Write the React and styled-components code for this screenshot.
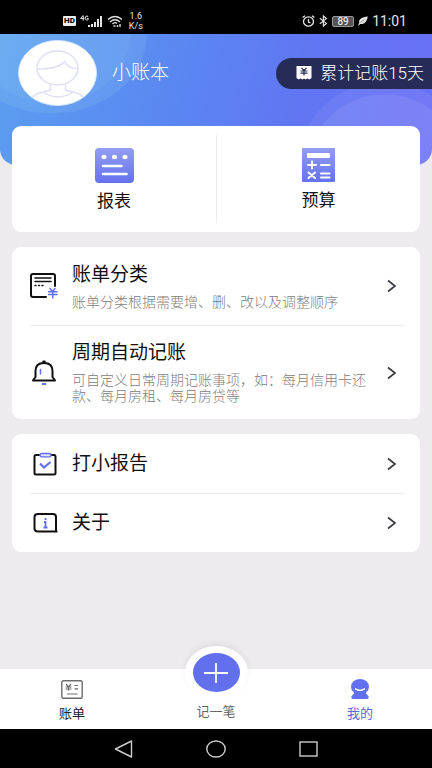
import styled, { createGlobalStyle } from "styled-components";

const GlobalStyle = createGlobalStyle`
  * {
    box-sizing: border-box;
  }

  body {
    margin: 0;
    background: #edebee;
    font-family: Roboto, "Noto Sans CJK SC", sans-serif;
    color: #111;
  }

  button {
    border: 0;
    padding: 0;
    background: none;
    font: inherit;
    color: inherit;
    cursor: pointer;
  }

  svg {
    display: block;
    flex-shrink: 0;
  }
`;

const Page = styled.div`
  display: flex;
  flex-direction: column;
  min-height: 100vh;
`;

const StatusBar = styled.div`
  display: flex;
  align-items: center;
  justify-content: space-between;
  height: 34px;
  padding: 8px 25px 0 63px;
  background: #000;
  color: #e4e4e4;
`;

const StatusGroup = styled.div`
  display: flex;
  align-items: center;
  gap: 4px;
`;

const HdBadge = styled.span`
  padding: 0 1px;
  border-radius: 1px;
  background: #eee;
  color: #000;
  font-size: 8px;
  font-weight: 800;
  line-height: 10px;
`;

const NetSpeed = styled.span`
  margin-left: 2px;
  font-size: 9px;
  line-height: 10px;
  text-align: center;
`;

const Battery = styled.span`
  width: 22px;
  border: 1px solid #999;
  border-radius: 2px;
  background: #555;
  color: #fff;
  font-size: 10px;
  line-height: 9px;
  text-align: center;
`;

const Clock = styled.span`
  font-size: 14px;
  line-height: 16px;
`;

const Header = styled.header`
  height: 131px;
  border-radius: 0 0 16px 16px;
  background:
    radial-gradient(ellipse 72px 62px at 89% 122px, rgba(255, 255, 255, 0.07) 98%, transparent),
    radial-gradient(ellipse 84px 74px at 89% 122px, rgba(255, 255, 255, 0.06) 98%, transparent),
    radial-gradient(ellipse 80px 70px at 12% 0, rgba(170, 225, 240, 0.08) 97%, transparent),
    radial-gradient(ellipse 96px 80px at 12% 0, rgba(170, 225, 240, 0.13) 98%, transparent),
    linear-gradient(105deg, #5b9ff0 0%, #5a86f1 42%, #6176f2 68%, #6a6ff5 100%);
`;

const Profile = styled.div`
  display: flex;
  align-items: center;
  gap: 15px;
  padding: 6px 0 0 18px;
`;

const UserName = styled.h1`
  flex: 1;
  margin: 0;
  color: #fff;
  font-size: 19px;
  font-weight: 300;
  line-height: 24px;
`;

const DaysBadge = styled.div`
  display: flex;
  align-items: center;
  gap: 8px;
  height: 31px;
  padding: 0 8px 0 20px;
  border-radius: 16px 0 0 16px;
  background: #262b58;
  color: #fff;
  font-size: 17px;
  font-weight: 300;
  line-height: 24px;
  white-space: nowrap;
`;

const Content = styled.main`
  display: flex;
  flex: 1;
  flex-direction: column;
  gap: 15px;
  margin-top: -39px;
  padding: 0 12px 24px;
`;

const Card = styled.section`
  border-radius: 9px;
  background: #fff;
`;

const ShortcutCard = styled(Card)`
  display: grid;
  grid-template-columns: 1fr 1fr;
  padding: 9px 0;
`;

const Shortcut = styled.button`
  display: flex;
  flex-direction: column;
  align-items: center;
  gap: 6px;
  height: 88px;
  padding-top: 13px;
  font-size: 17px;
  line-height: 24px;

  & + & {
    border-left: 1px solid #ececf0;
  }
`;

const Row = styled.button`
  display: grid;
  grid-template-columns: 28px 1fr 10px;
  align-items: center;
  gap: 14px;
  width: calc(100% - 34px);
  min-height: ${(props) => props.$height}px;
  margin: 0 16px 0 18px;
  padding-right: 7px;
  text-align: left;

  & + & {
    border-top: 1px solid #ececee;
  }
`;

const RowText = styled.span`
  display: flex;
  flex-direction: column;
  gap: 7px;
`;

const RowTitle = styled.span`
  font-size: 19px;
  line-height: 24px;
`;

const RowNote = styled.span`
  color: #808080;
  font-size: 14px;
  font-weight: 300;
  line-height: 16px;
`;

const TabBar = styled.nav`
  display: grid;
  grid-template-columns: repeat(3, 1fr);
  grid-template-rows: 60px;
  align-items: end;
  background: #fff;
`;

const Tab = styled.button`
  display: flex;
  flex-direction: column;
  align-items: center;
  gap: 5px;
  padding-bottom: 5px;
  color: ${(props) => props.$color};
  font-size: 13px;
  line-height: 20px;
`;

const AddTab = styled(Tab)`
  gap: 3px;
  padding-bottom: 7px;
`;

const AddCircle = styled.span`
  display: flex;
  align-items: center;
  justify-content: center;
  width: 63px;
  height: 53px;
  border: solid #fff;
  border-width: 7px 8px;
  border-radius: 50%;
  background: #6270ee;
  box-shadow: 0 -3px 6px rgba(0, 0, 0, 0.06);
`;

const SystemNav = styled.div`
  display: flex;
  align-items: center;
  justify-content: center;
  gap: 73px;
  height: 39px;
  background: #000;
`;

const SystemKey = styled.button`
  display: flex;
`;

const Signal = () => (
  <svg width="23" height="13" viewBox="0 0 23 13" fill="#e4e4e4">
    <path d="M3 .6L.6 3.600h3.800M3.200.600v5M8.200 1.600C6.400.2 5.200 1.400 5.200 3s1.600 3 3 1.600V3.300H6.800" fill="none" stroke="#e4e4e4" />
    <path d="M8 10h2v2H8zM11 9h2v3h-2zM14 7h2v5h-2zM17 4h2v8h-2zM20 1h2v11h-2z" />
  </svg>
);

const Wifi = () => (
  <svg width="16" height="13" viewBox="0 0 16 13" fill="none" stroke="#e4e4e4" strokeWidth="1.400">
    <path d="M1 4.500Q8-1.500 15 4.500M3 7Q8 2.500 13 7M5.500 9Q8 6.500 10 8.500" />
    <path d="M6.500 11h2M10.500 10v2M13 9v3" />
  </svg>
);

const Alarm = () => (
  <svg width="13" height="12" viewBox="0 0 13 12" fill="none" stroke="#e4e4e4" strokeWidth="1.300">
    <ellipse cx="6.500" cy="6.500" rx="5" ry="4.600" />
    <path d="M6.500 4v3l2 1M.6 2.600L3 .8M12.400 2.600L10 .8" />
  </svg>
);

const Bluetooth = () => (
  <svg width="9" height="12" viewBox="0 0 9 12" fill="none" stroke="#e4e4e4" strokeWidth="1.200">
    <path d="M.8 3.200l6.600 5.200L4.400 11V1l3 2.600L.8 8.800" />
  </svg>
);

const Leaf = () => (
  <svg width="10" height="10" viewBox="0 0 10 10" fill="#e4e4e4">
    <path d="M9.800.500C4 1 .5 3 1.200 7L0 9.200l.8.400L2.200 8C7 8.500 9 5 9.800.500z" />
    <path d="M2.500 6.500L6.500 3.500" stroke="#333" strokeWidth=".5" />
  </svg>
);

const Avatar = () => (
  <svg width="79" height="66" viewBox="0 0 79 66" fill="none" stroke="#dedff2" strokeWidth="1.500">
    <ellipse cx="39.500" cy="33" rx="39" ry="32.500" fill="#fff" stroke="#d5e5fd" strokeWidth="1" />
    <ellipse cx="39.500" cy="28" rx="20.500" ry="17" />
    <path d="M19 29c12 0 22-1 27.500-7.500 2 4 6 7 12 7" />
    <path d="M32.500 44.500v5.500c-5 2-13 1.500-18 7M47.500 44.500v5.500c5 2 13 1.500 18 7M25 52q15 10 30 0" />
  </svg>
);

const DaysIcon = () => (
  <svg width="16" height="14" viewBox="0 0 16 14">
    <path d="M.5 0h15v12l-2 1.500-2-1-2 1-1.500-1-1.500 1-2-1-2 1-2-1.500z" fill="#fff" />
    <path d="M5.500 2L8 4.500 10.500 2M4.500 5h7M4.500 7.200h7M8 4.500V9.500" fill="none" stroke="#262b58" strokeWidth="1.200" />
  </svg>
);

const ReportIcon = () => (
  <svg width="39" height="35" viewBox="0 0 39 35">
    <defs>
      <linearGradient id="reportFill" x1="0" y1="0" x2="0" y2="1">
        <stop offset="0" stopColor="#949df3" />
        <stop offset="1" stopColor="#6472ee" />
      </linearGradient>
    </defs>
    <rect width="39" height="35" rx="4" fill="url(#reportFill)" />
    <g fill="#fff">
      <ellipse cx="9" cy="9" rx="2.600" ry="2.200" />
      <ellipse cx="19.500" cy="9" rx="2.600" ry="2.200" />
      <ellipse cx="30" cy="9" rx="2.600" ry="2.200" />
    </g>
    <path d="M8 18h18.500M8 26h23.500" stroke="#fff" strokeWidth="2.600" strokeLinecap="round" />
  </svg>
);

const BudgetIcon = () => (
  <svg width="33" height="34" viewBox="0 0 33 34">
    <defs>
      <linearGradient id="budgetFill" x1="0" y1="0" x2="0" y2="1">
        <stop offset="0" stopColor="#949df3" />
        <stop offset="1" stopColor="#6472ee" />
      </linearGradient>
    </defs>
    <rect width="33" height="34" rx="1" fill="url(#budgetFill)" />
    <rect x="5" y="5" width="23" height="5" rx="1" fill="#fff" />
    <path
      d="M6 17h8M10 13.500v7M19 17h8.500M6.500 24.500l6.500 5.500M13 24.500L6.500 30M19 25.500h8.500M19 29.500h8.500"
      stroke="#fff"
      strokeWidth="2"
      strokeLinecap="round"
    />
  </svg>
);

const CategoryIcon = () => (
  <svg width="28" height="26" viewBox="0 0 28 26" fill="none" strokeWidth="2" strokeLinecap="round">
    <path d="M16 24H3q-2 0-2-2V3q0-2 2-2h20q2 0 2 2v10" stroke="#111" />
    <path d="M5 5h16M5 8.500h16" stroke="#111" strokeWidth="1.600" />
    <path d="M5 12.500h1M8.500 12.500h1M12 12.500h1" stroke="#111" strokeWidth="1.500" />
    <path d="M20 15.500l2.500 3 2.500-3M18.500 18.800h8.500M18.500 21.600h8.500M22.800 18v7" stroke="#6270ee" strokeWidth="1.500" />
  </svg>
);

const BellIcon = () => (
  <svg width="28" height="26" viewBox="0 0 28 26" fill="none" stroke="#111" strokeWidth="2" strokeLinecap="round" strokeLinejoin="round">
    <path d="M14 3C7.500 3 5.500 7 5.500 11v6L3 20.500h22L22.500 17v-6C22.500 7 20.500 3 14 3z" />
    <path d="M13.500 1.800h1" strokeWidth="2.500" />
    <path d="M10.500 9.500v4.500" stroke="#6270ee" strokeWidth="1.500" />
    <path d="M12.500 24h3" stroke="#6270ee" strokeWidth="1.800" />
  </svg>
);

const ClipboardIcon = () => (
  <svg width="28" height="24" viewBox="0 0 28 24" fill="none" strokeWidth="2">
    <rect x="4.500" y="3" width="21" height="19.500" rx="1.500" stroke="#111" />
    <rect x="10" y="1.500" width="11" height="3.400" rx="1.700" stroke="#6270ee" fill="#dfe2ff" strokeWidth="1.400" />
    <path d="M10 11.500l4 4 6.500-5.500" stroke="#6270ee" strokeWidth="2.200" />
  </svg>
);

const InfoIcon = () => (
  <svg width="28" height="20" viewBox="0 0 28 20" fill="none" strokeWidth="2">
    <path d="M27.500 18.500H8q-3.500 0-3.500-3V4q0-3 3.500-3h15q3 0 3 3v14.500" stroke="#111" />
    <path d="M15.500 5v2M14 9h1.500v5.500M13.500 14.500h4" stroke="#6270ee" strokeWidth="1.800" />
  </svg>
);

const Chevron = () => (
  <svg width="10" height="14" viewBox="0 0 10 14" fill="none" stroke="#3c3c44" strokeWidth="1.700">
    <path d="M1 1.500L8 7l-7 5.500" />
  </svg>
);

const BillIcon = () => (
  <svg width="22" height="19" viewBox="0 0 22 19" fill="none" stroke="#6c6c6c" strokeWidth="1.400">
    <rect x=".8" y=".8" width="20.400" height="17.400" rx="1.500" />
    <path d="M5 4l2.500 3L10 4M4.500 7h6M4.500 9h6M7.500 7v3.500M13.500 5.500h3.500M13.500 8.800h3.500M6 14h10.500" strokeWidth="1.200" />
  </svg>
);

const PlusIcon = () => (
  <svg width="26" height="22" viewBox="0 0 26 22" stroke="#fff" strokeWidth="1.800">
    <path d="M1 11h24M13 1v20" />
  </svg>
);

const MineIcon = () => (
  <svg width="18" height="20" viewBox="0 0 18 20" fill="#6270ee">
    <ellipse cx="9" cy="7.800" rx="9" ry="7.800" />
    <path d="M4 13h10l3.500 4.500q.8 2.500-1.500 2.500H2Q-.3 20 .5 17.500z" />
    <path d="M4.500 9.800q4.500 3 9 0" fill="none" stroke="#fff" strokeWidth="1.400" strokeLinecap="round" />
  </svg>
);

const SettingRow = ({ icon, title, note, height }) => (
  <Row type="button" $height={height}>
    {icon}
    <RowText>
      <RowTitle>{title}</RowTitle>
      {note && <RowNote>{note}</RowNote>}
    </RowText>
    <Chevron />
  </Row>
);

const App = () => {
  return (
    <Page>
      <GlobalStyle />
      <StatusBar>
        <StatusGroup>
          <HdBadge>HD</HdBadge>
          <Signal />
          <Wifi />
          <NetSpeed>
            1.6
            <br />
            K/s
          </NetSpeed>
        </StatusGroup>
        <StatusGroup>
          <Alarm />
          <Bluetooth />
          <Battery>89</Battery>
          <Leaf />
          <Clock>11:01</Clock>
        </StatusGroup>
      </StatusBar>

      <Header>
        <Profile>
          <Avatar />
          <UserName>小账本</UserName>
          <DaysBadge>
            <DaysIcon />
            累计记账15天
          </DaysBadge>
        </Profile>
      </Header>

      <Content>
        <ShortcutCard>
          <Shortcut type="button">
            <ReportIcon />
            报表
          </Shortcut>
          <Shortcut type="button">
            <BudgetIcon />
            预算
          </Shortcut>
        </ShortcutCard>

        <Card>
          <SettingRow
            height={78}
            icon={<CategoryIcon />}
            title="账单分类"
            note="账单分类根据需要增、删、改以及调整顺序"
          />
          <SettingRow
            height={94}
            icon={<BellIcon />}
            title="周期自动记账"
            note="可自定义日常周期记账事项，如：每月信用卡还款、每月房租、每月房贷等"
          />
        </Card>

        <Card>
          <SettingRow height={59} icon={<ClipboardIcon />} title="打小报告" />
          <SettingRow height={59} icon={<InfoIcon />} title="关于" />
        </Card>
      </Content>

      <TabBar>
        <Tab type="button" $color="#222">
          <BillIcon />
          账单
        </Tab>
        <AddTab type="button" $color="#666">
          <AddCircle>
            <PlusIcon />
          </AddCircle>
          记一笔
        </AddTab>
        <Tab type="button" $color="#5b68d8">
          <MineIcon />
          我的
        </Tab>
      </TabBar>

      <SystemNav>
        <SystemKey type="button" aria-label="返回">
          <svg width="19" height="18" viewBox="0 0 19 18" fill="none" stroke="#ccc" strokeWidth="1.400">
            <path d="M17.500 1v16L1.500 9z" strokeLinejoin="round" />
          </svg>
        </SystemKey>
        <SystemKey type="button" aria-label="主页">
          <svg width="20" height="18" viewBox="0 0 20 18" fill="none" stroke="#ccc" strokeWidth="1.400">
            <ellipse cx="10" cy="9" rx="9.200" ry="8" />
          </svg>
        </SystemKey>
        <SystemKey type="button" aria-label="最近任务">
          <svg width="19" height="16" viewBox="0 0 19 16" fill="none" stroke="#ccc" strokeWidth="1.400">
            <rect x="1" y="1" width="17" height="14" />
          </svg>
        </SystemKey>
      </SystemNav>
    </Page>
  );
};

export default App;
